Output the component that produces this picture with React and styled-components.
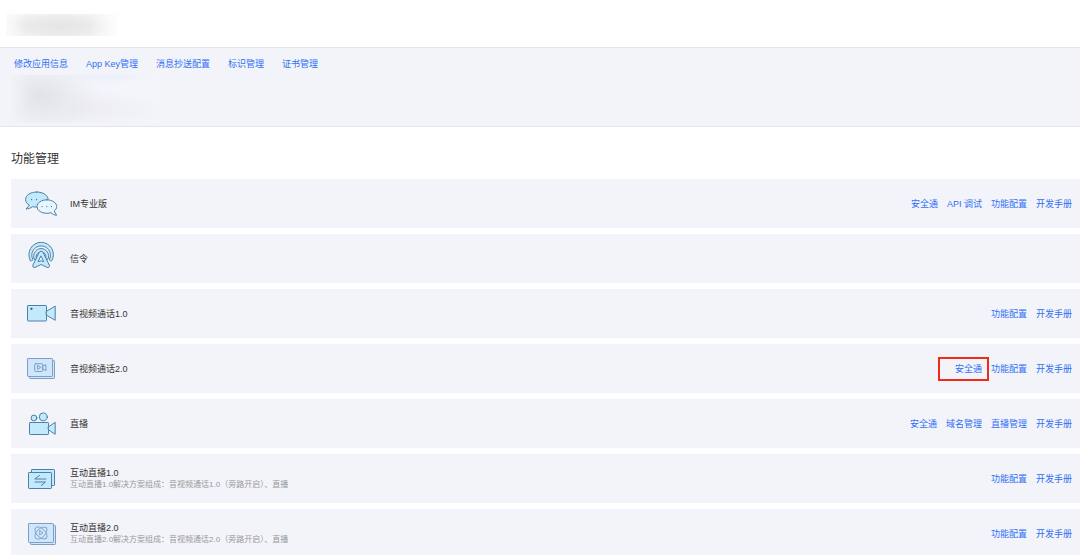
import React from "react";
import styled, { createGlobalStyle } from "styled-components";

const GlobalStyle = createGlobalStyle`
  * { box-sizing: border-box; }
  body {
    margin: 0;
    background: #fff;
    color: #333;
    font-family: "Liberation Sans", "Noto Sans CJK SC", sans-serif;
    font-size: 9px;
    line-height: 12px;
  }
`;

const Page = styled.div`
  min-width: 480px;
`;

const TopBar = styled.header`
  height: 47px;
  padding: 14px 6px 0;
`;

const HiddenName = styled.div`
  width: 112px;
  height: 22px;
  background:
    linear-gradient(90deg, #fafafa, transparent 16%, transparent 75%, #fdfdfd),
    radial-gradient(ellipse 60% 75% at 48% 55%, #e5e5e5, #ebebeb 50%, #f7f7f7);
`;

const AppPanel = styled.section`
  padding: 10px 14px 3px 11px;
  background: #f3f4f9;
  border-top: 1px solid #e3e5e8;
  border-bottom: 1px solid #e3e5e8;
`;

const Nav = styled.nav`
  display: flex;
  flex-wrap: wrap;
  gap: 18px;
  padding: 0 3px;
`;

const Link = styled.a`
  position: relative;
  color: #2f6ff5;
  text-decoration: none;
  white-space: nowrap;
`;

const MarkedLink = styled(Link)`
  &::after {
    content: "";
    position: absolute;
    inset: -6px -7px -6px -17px;
    border: 2px solid #f22a18;
  }
`;

const HiddenDetails = styled.div`
  width: 150px;
  height: 48px;
  margin-top: 5px;
  background:
    linear-gradient(90deg, #f1f2f6, transparent 12%),
    radial-gradient(ellipse 40% 80% at 20% 42%, rgba(224, 225, 230, 0.9), rgba(230, 231, 236, 0.6) 50%, transparent),
    radial-gradient(ellipse 65% 40% at 45% 72%, rgba(235, 235, 240, 0.9), transparent),
    radial-gradient(ellipse 30% 18% at 66% 0%, #e9eefb, transparent),
    #f4f5fa;
`;

const Features = styled.main`
  padding: 23px 0 0 11px;
`;

const Heading = styled.h1`
  margin: 0 0 11px;
  font-size: 12px;
  line-height: 18px;
  font-weight: 400;
`;

const List = styled.ul`
  display: flex;
  flex-direction: column;
  gap: 6px;
  margin: 0;
  padding: 0;
  list-style: none;
`;

const Row = styled.li`
  display: flex;
  align-items: center;
  gap: 12px;
  min-height: 49px;
  padding: 0 8px 0 13px;
  background: #f3f4f9;
`;

const Icon = styled.svg`
  flex: none;
  width: 34px;
  height: 33px;
  fill: ${(p) => (p.$muted ? "#cfe6fc" : "#c3e9fd")};
  stroke: ${(p) => (p.$muted ? "#7c9fc2" : "#4f7fa8")};
  stroke-width: 1;
  stroke-linejoin: round;
  stroke-linecap: round;
`;

const Info = styled.div`
  flex: 1;
  min-width: 0;
`;

const Name = styled.h2`
  margin: 0;
  font-size: 9px;
  line-height: 12px;
  font-weight: 400;
`;

const Note = styled.p`
  margin: 0;
  color: #999;
  font-size: 8px;
  line-height: 12px;
`;

const Actions = styled.div`
  display: flex;
  gap: 9px;
`;

const icons = {
  im: (
    <Icon viewBox="0 0 34 33" aria-hidden="true">
      <path d="M12.8 5C6.5 5 1.6 8.3 1.6 12.5c0 2.3 1.4 4.3 3.7 5.7L2 22c2.500-.1 4.700-.9 6.500-2.300 1.400.3 2.800.4 4.300.4 6.300 0 11.300-3.400 11.300-7.600S19.100 5 12.800 5z" />
      <path d="M7.500 12.500h.1M12.500 12.500h.1" strokeWidth="1.300" />
      <path fill="#e9f6ff" d="M22.800 12.800c-5.400 0-9.800 3-9.800 6.800s4.400 6.700 9.800 6.700c1.500 0 2.900-.2 4.100-.6 1.500 1.500 3.500 2.400 5.700 2.600l-2.400-4.300c1.500-1.200 2.500-2.700 2.500-4.400 0-3.800-4.500-6.800-9.900-6.800z" />
      <path d="M18 19.600h.1M22.700 19.600h.1M27.400 19.600h.1" strokeWidth="1.300" />
    </Icon>
  ),
  signal: (
    <Icon viewBox="0 0 34 33" aria-hidden="true">
      <path d="M6.300 18.500A12.300 12.300 0 1 1 27.900 18.500c-.7 1.200-3 .2-2.400-1.300A9.300 9.300 0 1 0 8.700 17.200c.6 1.500-1.700 2.500-2.400 1.300z" />
      <path d="M10.300 17.200a7.500 7.500 0 1 1 13.600 0c-.6 1-2.500.3-2.100-1a4.900 4.900 0 1 0-9.400 0c.4 1.300-1.500 2-2.100 1z" />
      <path d="M17.100 9.400c1 0 1.700.6 2.100 1.400l6.100 12.300c.7 1.500-.7 3-2.200 2.300l-6-2.900-6 2.900c-1.500.7-2.900-.8-2.200-2.300L15 10.800c.4-.8 1.100-1.400 2.100-1.400z" />
      <path fill="#f3f4f9" d="M17.100 14.200l2.700 5.400-2.700-.8-2.700.8z" />
    </Icon>
  ),
  call1: (
    <Icon viewBox="0 0 34 33" aria-hidden="true">
      <rect x="3.500" y="8.500" width="19" height="15.500" rx="0.700" />
      <path d="M22.500 14.300l8.700-5.200v14.200l-8.700-5.200z" />
      <circle cx="7.300" cy="11.800" r="0.600" fill="#28557f" stroke="#28557f" />
    </Icon>
  ),
  call2: (
    <Icon $muted viewBox="0 0 34 33" aria-hidden="true">
      <rect x="5.500" y="8.500" width="25" height="18" rx="0.700" />
      <rect x="3.500" y="6.500" width="25" height="18" rx="0.700" />
      <rect x="10.700" y="11.700" width="8" height="7.800" rx="1" fill="none" />
      <path fill="none" d="M18.700 14.200l3.200-1.600v6l-3.200-1.600zM13.600 13.700v3.800l2.700-1.900z" />
    </Icon>
  ),
  live: (
    <Icon viewBox="0 0 34 33" aria-hidden="true">
      <circle cx="10" cy="11" r="2.900" />
      <circle cx="19.300" cy="9.900" r="4" />
      <rect x="5.500" y="15.500" width="19" height="12" rx="0.700" />
      <path d="M24.500 19.800l6.700-4.500v12l-6.700-4.500z" />
    </Icon>
  ),
  interactive1: (
    <Icon viewBox="0 0 34 33" aria-hidden="true">
      <rect x="7.500" y="7.500" width="23" height="16" rx="0.700" />
      <rect x="4.500" y="10.500" width="23" height="16" rx="0.700" />
      <path fill="none" d="M22 17H10.700l4.800-3.500M11 20h10.500l-4.300 3.600" />
    </Icon>
  ),
  interactive2: (
    <Icon $muted viewBox="0 0 34 33" aria-hidden="true">
      <rect x="6.500" y="8.500" width="25" height="19" rx="0.700" />
      <rect x="4.500" y="6.500" width="25" height="19" rx="0.700" />
      <g fill="none" strokeWidth="0.900">
        <ellipse cx="17" cy="16" rx="7.500" ry="4.200" transform="rotate(45 17 16)" />
        <ellipse cx="17" cy="16" rx="7.500" ry="4.200" transform="rotate(-45 17 16)" />
        <path d="M15.700 14v4l3-2z" />
      </g>
    </Icon>
  ),
};

const navLinks = ["修改应用信息", "App Key管理", "消息抄送配置", "标识管理", "证书管理"];

const features = [
  { icon: "im", name: "IM专业版", actions: ["安全通", "API 调试", "功能配置", "开发手册"] },
  { icon: "signal", name: "信令", actions: [] },
  { icon: "call1", name: "音视频通话1.0", actions: ["功能配置", "开发手册"] },
  { icon: "call2", name: "音视频通话2.0", actions: ["安全通", "功能配置", "开发手册"], marked: "安全通" },
  { icon: "live", name: "直播", actions: ["安全通", "域名管理", "直播管理", "开发手册"] },
  {
    icon: "interactive1",
    name: "互动直播1.0",
    note: "互动直播1.0解决方案组成：音视频通话1.0（旁路开启）、直播",
    actions: ["功能配置", "开发手册"],
  },
  {
    icon: "interactive2",
    name: "互动直播2.0",
    note: "互动直播2.0解决方案组成：音视频通话2.0（旁路开启）、直播",
    actions: ["功能配置", "开发手册"],
  },
];

function FeatureRow({ feature }) {
  return (
    <Row>
      {icons[feature.icon]}
      <Info>
        <Name>{feature.name}</Name>
        {feature.note && <Note>{feature.note}</Note>}
      </Info>
      <Actions>
        {feature.actions.map((label) => {
          const Action = label === feature.marked ? MarkedLink : Link;
          return (
            <Action key={label} href="#">
              {label}
            </Action>
          );
        })}
      </Actions>
    </Row>
  );
}

export default function App() {
  return (
    <Page lang="zh-CN">
      <GlobalStyle />
      <TopBar>
        <HiddenName />
      </TopBar>
      <AppPanel>
        <Nav>
          {navLinks.map((label) => (
            <Link key={label} href="#">
              {label}
            </Link>
          ))}
        </Nav>
        <HiddenDetails />
      </AppPanel>
      <Features>
        <Heading>功能管理</Heading>
        <List>
          {features.map((feature) => (
            <FeatureRow key={feature.name} feature={feature} />
          ))}
        </List>
      </Features>
    </Page>
  );
}
